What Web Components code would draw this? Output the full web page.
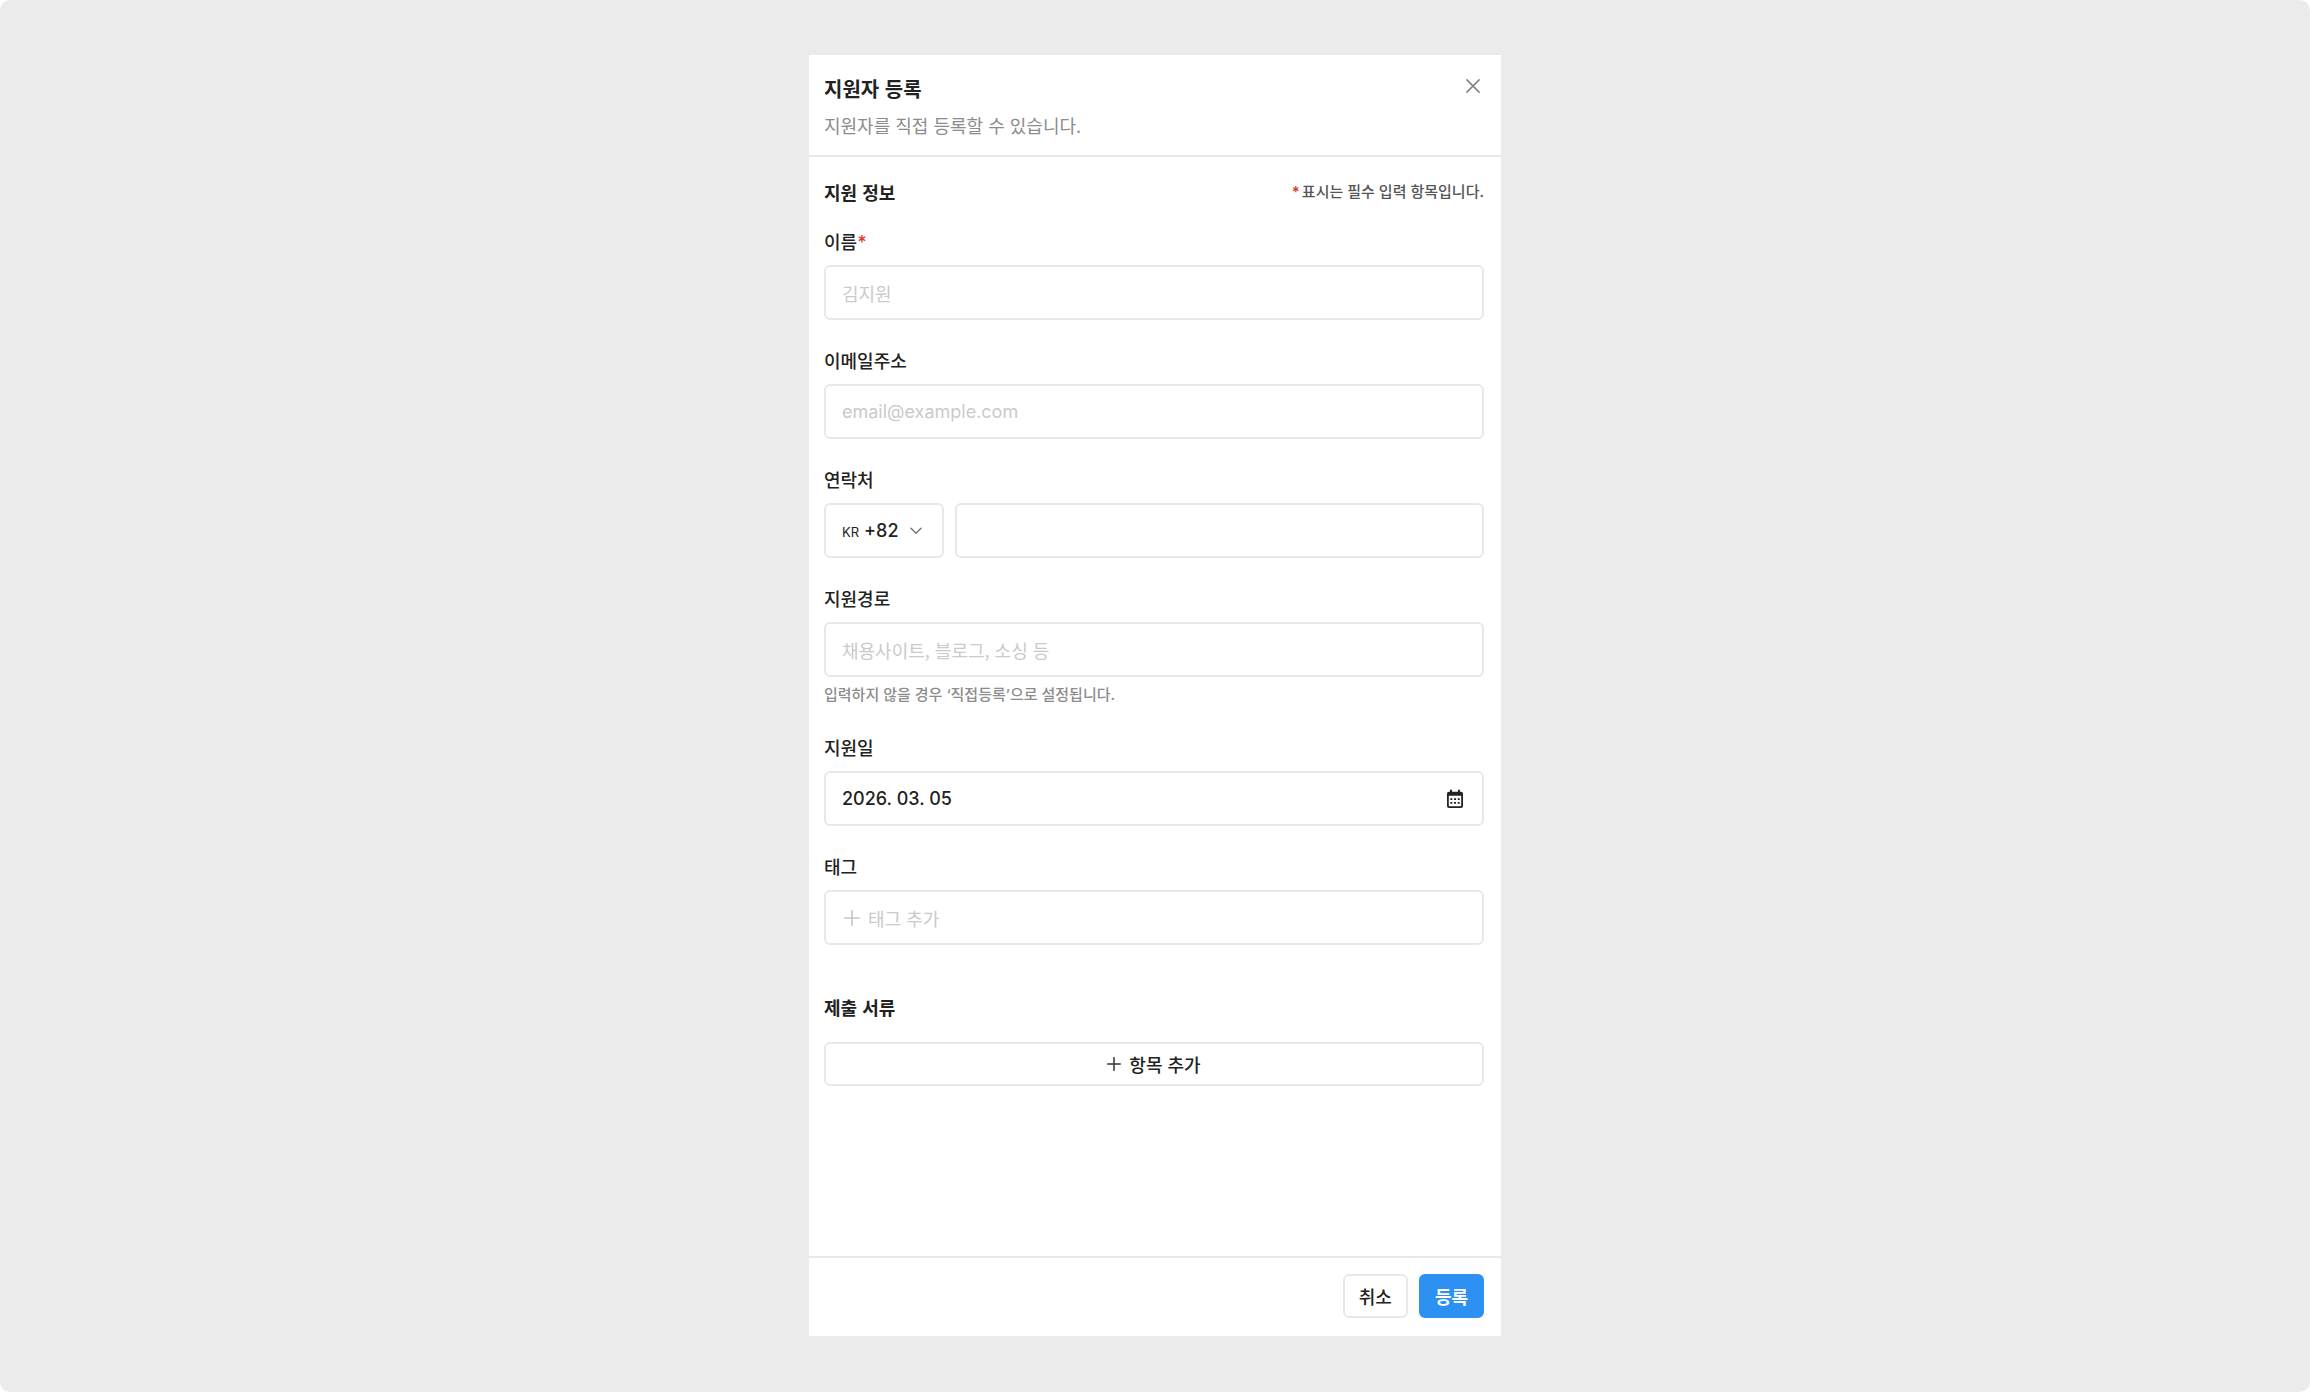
<!DOCTYPE html>
<html lang="ko">
<head>
<meta charset="utf-8">
<meta name="viewport" content="width=device-width, initial-scale=1">
<title>지원자 등록</title>
<style>
  body {
    margin: 0;
    background: #fff;
    color: #222;
    font-family: "Noto Sans CJK KR", Inter, sans-serif;
    font-size: 18px;
    line-height: 26px;
    --latin: Inter, "Noto Sans CJK KR", sans-serif;
    --line: #e8e8e8;
    --muted: #8c8c8c;
    --placeholder: #cacaca;
    --required: #e5352d;
    --primary: #2d91f3;
  }
</style>
</head>
<body>
<app-backdrop>
  <side-panel heading="지원자 등록" description="지원자를 직접 등록할 수 있습니다.">
    <form-section heading="지원 정보" note="표시는 필수 입력 항목입니다.">
      <text-field label="이름" placeholder="김지원" required></text-field>
      <text-field label="이메일주소" type="email" placeholder="email@example.com" latin></text-field>
      <phone-field label="연락처"></phone-field>
      <text-field label="지원경로" placeholder="채용사이트, 블로그, 소싱 등" hint="입력하지 않을 경우 ‘직접등록’으로 설정됩니다."></text-field>
      <text-field label="지원일" value="2026. 03. 05" latin><ui-icon slot="end" name="calendar"></ui-icon></text-field>
      <text-field label="태그" placeholder="태그 추가"><ui-icon slot="start" name="plus"></ui-icon></text-field>
    </form-section>
    <form-section heading="제출 서류">
      <ui-button block><ui-icon name="plus-small"></ui-icon>항목 추가</ui-button>
    </form-section>
    <ui-button slot="actions">취소</ui-button>
    <ui-button slot="actions" primary>등록</ui-button>
  </side-panel>
</app-backdrop>

<script>
const icons = {
  close: '<svg width="14" height="14" viewBox="0 0 14 14" fill="none" stroke="#808080" stroke-width="1.5" stroke-linecap="round"><path d="M.9.9l12.2 12.2M13.1.9L.9 13.1"/></svg>',
  chevron: '<svg width="12" height="8" viewBox="0 0 12 8" fill="none" stroke="#777" stroke-width="1.5" stroke-linecap="round" stroke-linejoin="round"><path d="M1 1.2l5 5 5-5"/></svg>',
  plus: '<svg width="16" height="16" viewBox="0 0 16 16" fill="none" stroke="#c6c6c6" stroke-width="1.7" stroke-linecap="round"><path d="M8 .9v14.2M.9 8h14.2"/></svg>',
  'plus-small': '<svg width="14" height="14" viewBox="0 0 14 14" fill="none" stroke="#333" stroke-width="1.5" stroke-linecap="round"><path d="M7 .7v12.6M.7 7h12.6"/></svg>',
  calendar: '<svg width="18" height="20" viewBox="0 0 18 20"><path fill="#222" fill-rule="evenodd" d="M4 1.600a1 1 0 0 1 2 0V2.700h6V1.600a1 1 0 0 1 2 0V2.700h1a2 2 0 0 1 2 2V17a2 2 0 0 1-2 2H3a2 2 0 0 1-2-2V4.700a2 2 0 0 1 2-2h1zM2.800 6.800V16.600a.7.7 0 0 0 .7.7h11a.7.7 0 0 0 .7-.7V6.800z"/><path fill="#222" d="M4.300 9.200h2v1.800h-2zM8 9.200h2v1.800h-2zM11.700 9.200h2v1.800h-2zM4.300 13h2v1.800h-2zM8 13h2v1.800h-2zM11.700 13h2v1.800h-2z"/></svg>'
};

class BaseElement extends HTMLElement {
  connectedCallback() {
    if (this.shadowRoot) return;
    this.attachShadow({ mode: 'open' }).innerHTML = this.render();
  }
  attr(name) { return this.getAttribute(name) || ''; }
}

customElements.define('ui-icon', class extends BaseElement {
  render() {
    return `<style>:host{display:inline-flex;flex:none}svg{display:block}</style>${icons[this.attr('name')]}`;
  }
});

customElements.define('app-backdrop', class extends BaseElement {
  render() {
    return `<style>
      :host { display:flex; justify-content:center; box-sizing:border-box; min-height:100vh; padding:55px 24px 56px; background:#ebebeb; border-radius:10px; }
    </style><slot></slot>`;
  }
});

customElements.define('side-panel', class extends BaseElement {
  render() {
    return `<style>
      :host { display:flex; flex-direction:column; width:100%; max-width:692px; background:#fff; }
      header { display:flex; justify-content:space-between; align-items:flex-start; padding:20px 17px 17px 15px; border-bottom:2px solid var(--line); }
      h1 { margin:0 0 9px; font-size:20px; line-height:28px; font-weight:600; }
      p { margin:0; color:var(--muted); }
      .close { margin:0; padding:4px; border:0; background:none; cursor:pointer; }
      main { flex:1; display:flex; flex-direction:column; gap:50px; padding:22px 17px 24px 15px; }
      footer { display:flex; justify-content:flex-end; gap:11px; padding:16px 17px 18px 15px; border-top:2px solid var(--line); }
    </style>
    <header>
      <div><h1>${this.attr('heading')}</h1><p>${this.attr('description')}</p></div>
      <button class="close" type="button" aria-label="닫기"><ui-icon name="close"></ui-icon></button>
    </header>
    <main><slot></slot></main>
    <footer><slot name="actions"></slot></footer>`;
  }
});

customElements.define('form-section', class extends BaseElement {
  render() {
    const note = this.attr('note');
    return `<style>
      :host { display:block; }
      .head { display:flex; justify-content:space-between; align-items:center; margin-bottom:22px; }
      h2 { margin:0; font-size:18px; line-height:26px; font-weight:600; }
      .note { font-family:var(--latin); font-size:15px; font-weight:500; color:#555; }
      b { color:var(--required); font-weight:600; margin-right:2px; }
      .fields { display:flex; flex-direction:column; gap:27px; }
    </style>
    <div class="head"><h2>${this.attr('heading')}</h2>${note ? `<span class="note"><b>*</b>${note}</span>` : ''}</div>
    <div class="fields"><slot></slot></div>`;
  }
});

const fieldStyle = `
  :host { display:block; margin-bottom:-1px; }
  label { display:block; margin:1px 0 11px; font-weight:500; }
  b { color:var(--required); font-family:var(--latin); font-weight:500; line-height:0; }
  .box { display:flex; align-items:center; box-sizing:border-box; height:55px; padding:0 16px; border:2px solid var(--line); border-radius:6px; background:#fff; }
  input, select { font:inherit; font-weight:500; line-height:26px; color:inherit; margin:0; padding:0; border:0; outline:0; background:none; }
  input { flex:1; min-width:0; width:100%; }
  input::placeholder { color:var(--placeholder); font-weight:400; opacity:1; }
`;

customElements.define('text-field', class extends BaseElement {
  render() {
    const hint = this.attr('hint');
    const required = this.hasAttribute('required');
    return `<style>${fieldStyle}
      :host([latin]) input { font-family:var(--latin); }
      ::slotted([slot="start"]) { margin:0 8px 0 2px; }
      ::slotted([slot="end"]) { margin-right:2px; }
      .hint { margin:7px 0 1px; font-family:var(--latin); font-size:15px; line-height:22px; font-weight:500; color:var(--muted); }
    </style>
    <label for="field">${this.attr('label')}${required ? '<b>*</b>' : ''}</label>
    <div class="box">
      <slot name="start"></slot>
      <input id="field" type="${this.attr('type') || 'text'}" placeholder="${this.attr('placeholder')}" value="${this.attr('value')}"${required ? ' required' : ''}>
      <slot name="end"></slot>
    </div>
    ${hint ? `<div class="hint">${hint}</div>` : ''}`;
  }
});

customElements.define('phone-field', class extends BaseElement {
  render() {
    return `<style>${fieldStyle}
      .row { display:flex; gap:11px; font-family:var(--latin); }
      .country { flex:none; width:120px; }
      .number { flex:1; }
      .country span { font-size:13px; margin-right:5px; padding-top:2px; }
      select { appearance:none; flex:1; min-width:0; }
      ui-icon { margin-right:4px; }
    </style>
    <label for="number">${this.attr('label')}</label>
    <div class="row">
      <div class="box country">
        <span>KR</span>
        <select aria-label="국가 번호"><option>+82</option></select>
        <ui-icon name="chevron"></ui-icon>
      </div>
      <div class="box number"><input id="number" type="tel"></div>
    </div>`;
  }
});

customElements.define('ui-button', class extends BaseElement {
  render() {
    return `<style>
      :host { display:inline-flex; }
      :host([block]) { display:flex; }
      button { flex:1; display:flex; align-items:center; justify-content:center; gap:8px; box-sizing:border-box; height:44px; margin:0; padding:0 14px; border:2px solid var(--line); border-radius:6px; background:#fff; color:inherit; font:inherit; font-weight:500; cursor:pointer; }
      :host([primary]) button { background:var(--primary); border-color:var(--primary); color:#fff; font-weight:600; }
    </style><button type="button"><slot></slot></button>`;
  }
});
</script>
</body>
</html>
